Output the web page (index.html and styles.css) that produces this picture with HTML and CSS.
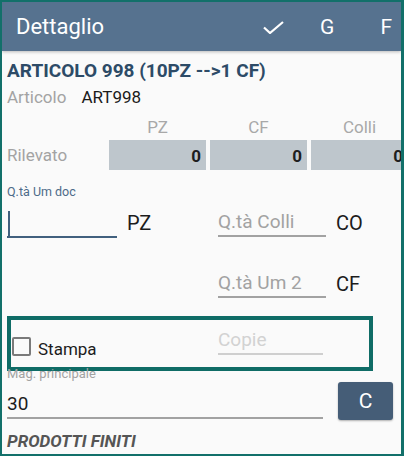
FILE: index.html
```html
<!DOCTYPE html>
<html lang="it">
<head>
<meta charset="utf-8">
<title>Dettaglio</title>
<link rel="stylesheet" href="styles.css">
</head>
<body>
<div class="frame">
  <header class="appbar">
    <div class="appbar-title">Dettaglio</div>
    <div class="actions">
      <svg class="act-check" width="21" height="13" viewBox="0 0 21 13"><polyline points="1,6.5 7,12 20,1" fill="none" stroke="#ffffff" stroke-width="2.2"/></svg>
      <span class="act act-g">G</span>
      <span class="act act-f">F</span>
    </div>
  </header>
  <main class="content">
    <div class="title">ARTICOLO 998 (10PZ --&gt;1 CF)</div>
    <div class="art-row"><span class="muted">Articolo</span><span class="art-code">ART998</span></div>
    <div class="qty-grid">
      <span></span>
      <span class="col-head">PZ</span>
      <span class="col-head">CF</span>
      <span class="col-head">Colli</span>
      <span class="muted row-label">Rilevato</span>
      <span class="qty-box">0</span>
      <span class="qty-box">0</span>
      <span class="qty-box">0</span>
    </div>
    <div class="small-label accent">Q.tà Um doc</div>
    <div class="form-row first">
      <div class="field active"><span class="cursor"></span></div>
      <span class="unit">PZ</span>
      <div class="field"><span class="placeholder">Q.tà Colli</span></div>
      <span class="unit">CO</span>
    </div>
    <div class="form-row second">
      <span></span>
      <span></span>
      <div class="field"><span class="placeholder">Q.tà Um 2</span></div>
      <span class="unit">CF</span>
    </div>
    <div class="print-box">
      <label class="check-group"><span class="checkbox"></span><span class="check-label">Stampa</span></label>
      <div class="field light"><span class="placeholder faint">Copie</span></div>
    </div>
    <div class="mag-row">
      <div class="mag-left">
        <div class="small-label muted mag-label">Mag. principale</div>
        <div class="field wide"><span class="value">30</span></div>
      </div>
      <button class="btn-c">C</button>
    </div>
    <div class="footer-label">PRODOTTI FINITI</div>
  </main>
</div>
</body>
</html>
```

FILE: styles.css
```css
* { box-sizing: border-box; }
html, body { margin: 0; padding: 0; background: #fafafa; }
body { font-family: Roboto, "Noto Sans", "Liberation Sans", sans-serif; }

.frame {
  width: 404px;
  height: 456px;
  border: 2px solid #12706a;
  border-right-width: 3px;
  background: #fafafa;
  overflow: hidden;
  display: flex;
  flex-direction: column;
}

.appbar {
  height: 49px;
  flex: none;
  background: #56728f;
  color: #ffffff;
  display: flex;
  align-items: center;
  padding-left: 14px;
  padding-right: 9px;
  box-shadow: 0 1px 3px rgba(0,0,0,0.25);
  position: relative;
  z-index: 1;
}
.appbar-title { font-size: 22px; }
.actions { margin-left: auto; display: flex; align-items: center; }
.act-check { display: block; margin-top: 1px; }
.act { font-size: 21px; line-height: 24px; }
.act-g { margin-left: 36px; }
.act-f { margin-left: 46px; }

.content {
  flex: 1;
  padding-left: 5px;
  overflow: hidden;
  position: relative;
}

.title {
  margin-top: 9px;
  font-size: 19px;
  line-height: 22px;
  font-weight: 700;
  color: #2d4b67;
  white-space: nowrap;
}

.art-row {
  margin-top: 5px;
  font-size: 17px;
  line-height: 20px;
  white-space: nowrap;
}
.muted { color: #a3a3a3; }
.art-code { margin-left: 15px; color: #1a1a1a; }

.qty-grid {
  margin-top: 10px;
  display: grid;
  grid-template-columns: 98px 97px 97px 97px;
  grid-template-rows: 20px 30px;
  column-gap: 4px;
  row-gap: 3px;
  width: 410px;
  font-size: 17px;
}
.col-head { text-align: center; color: #a8a8a8; line-height: 20px; }
.row-label { line-height: 30px; }
.qty-box {
  background: #bec6cc;
  text-align: right;
  padding-right: 5px;
  font-weight: 700;
  color: #1e1e1e;
  line-height: 30px;
  padding-top: 1px;
}

.small-label { font-size: 12.5px; line-height: 14px; white-space: nowrap; }
.accent { color: #4d6b89; margin-top: 15px; }

.form-row {
  display: grid;
  grid-template-columns: 110px 101px 108px auto;
  align-items: end;
  height: 30px;
}
.form-row.first { margin-top: 9px; }
.form-row.second { margin-top: 31px; }

.field {
  height: 28px;
  border-bottom: 2px solid #a2a2a2;
  font-size: 19px;
  line-height: 26px;
  margin-bottom: 1px;
  white-space: nowrap;
}
.field.active {
  border-bottom-color: #41607e;
  margin-bottom: 0;
  display: flex;
  align-items: flex-end;
  padding-left: 1px;
}
.cursor { display: block; width: 2px; height: 25px; background: #41607e; }
.placeholder { color: #a2a2a2; }
.placeholder.faint { color: #d2d2d2; }
.field.light { border-bottom-color: #cfcfcf; width: 105px; margin-bottom: 0; }

.unit {
  font-size: 20px;
  line-height: 24px;
  padding-left: 10px;
  color: #1c1c1c;
  margin-bottom: 3px;
}

.print-box {
  margin-top: 17px;
  width: 366px;
  height: 55px;
  border: 4px solid #0f6c66;
  display: grid;
  grid-template-columns: 207px 105px;
  align-items: end;
  padding-bottom: 12px;
}
.check-group {
  display: flex;
  align-items: flex-end;
  height: 20px;
  margin-bottom: -4px;
  padding-left: 1px;
}
.checkbox {
  display: block;
  width: 19px;
  height: 19px;
  border: 2px solid #7a7a7a;
  border-radius: 2px;
  margin-bottom: 3px;
  background: #fafafa;
}
.check-label { font-size: 17px; line-height: 20px; margin-left: 7px; color: #1c1c1c; }

.mag-row {
  margin-top: -3px;
  display: grid;
  grid-template-columns: 316px 55px;
  column-gap: 15px;
  align-items: start;
}
.mag-label { font-size: 13px; line-height: 12px; }
.field.wide { margin-top: 11px; height: 28px; margin-bottom: 0; }
.value { color: #1c1c1c; }

.btn-c {
  margin-top: 14px;
  height: 38px;
  border: none;
  border-radius: 3px;
  background: #455d77;
  color: #ffffff;
  font-family: inherit;
  font-size: 21px;
  padding: 0;
  box-shadow: 0 1px 2px rgba(0,0,0,0.3);
}

.footer-label {
  margin-top: 11px;
  font-size: 17px;
  line-height: 20px;
  font-weight: 700;
  font-style: italic;
  color: #555555;
}
```
